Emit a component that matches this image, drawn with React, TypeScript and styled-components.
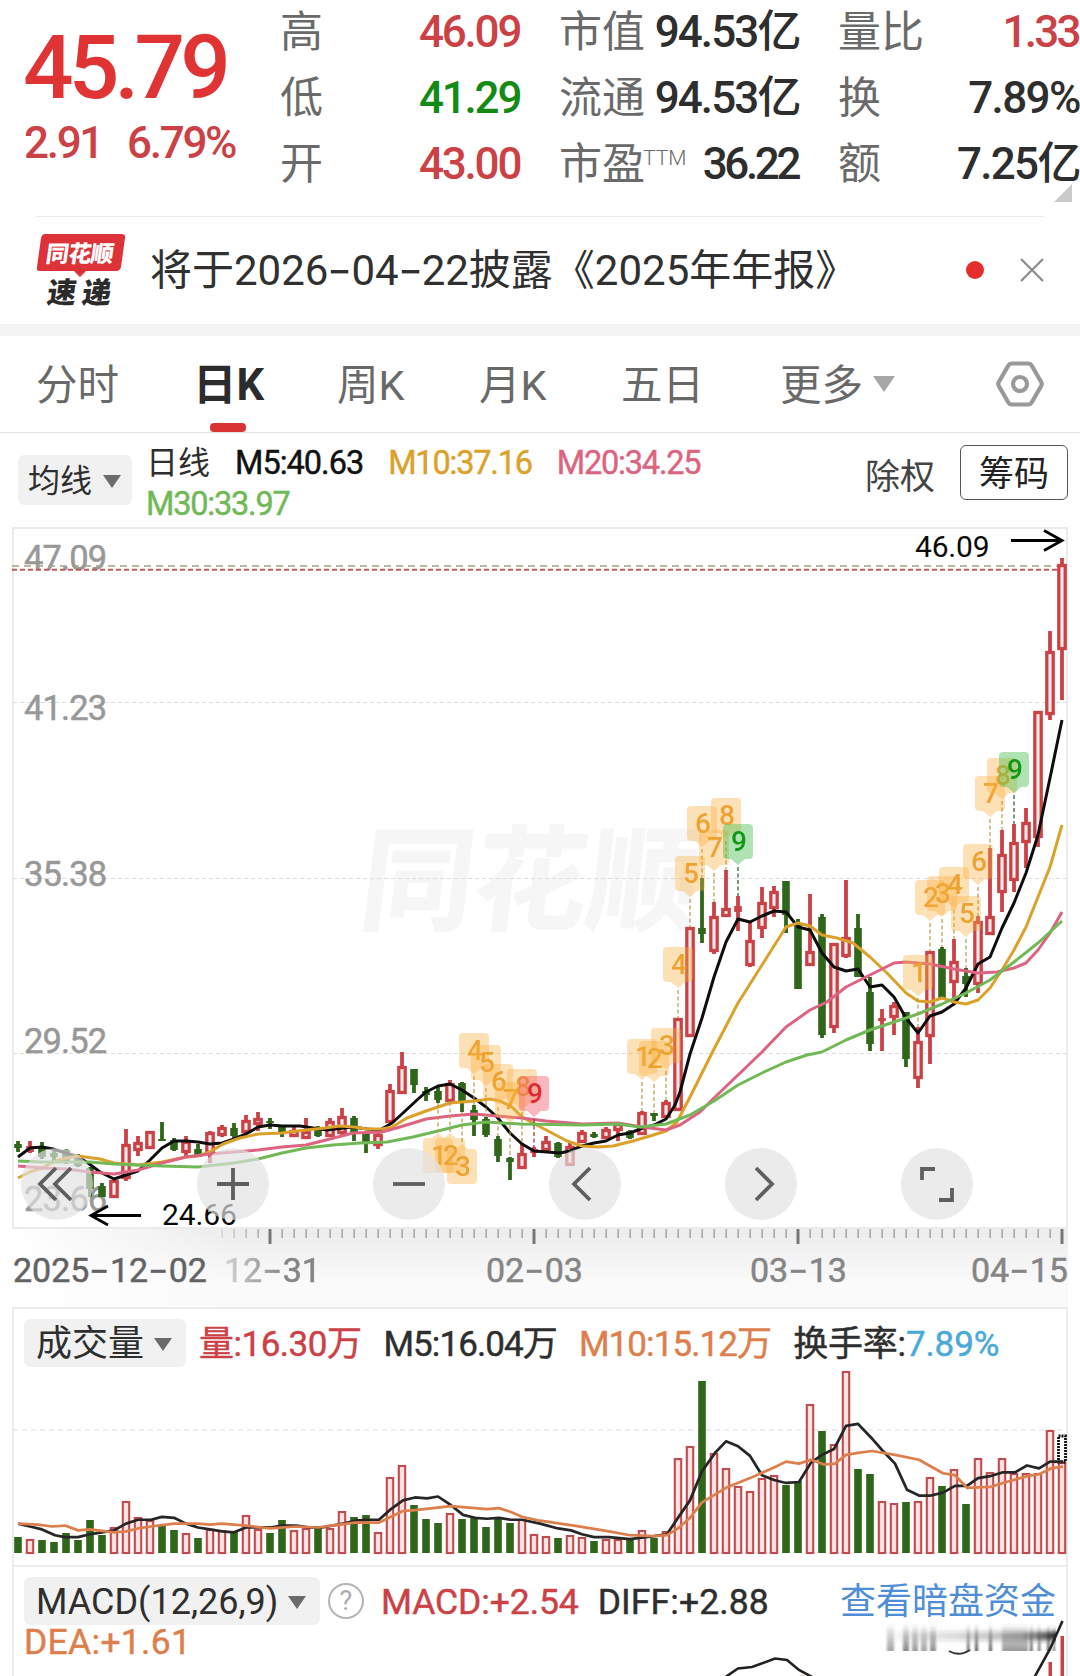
import React from "react";
import styled, { createGlobalStyle, css } from "styled-components";

const RED = "#cb4146";
const GREEN = "#2f6619";
const INK = "#2e2e2e";
const GOLD = "#dba12a";
const PINK = "#dd6480";
const LIME = "#70b956";
const FONT = `Roboto, "Noto Sans CJK SC", sans-serif`;

const Global = createGlobalStyle`
  * { box-sizing: border-box; }
  body { margin: 0; background: #fff; font-family: ${FONT}; color: ${INK}; }
`;

const Screen = styled.main`
  width: 1080px;
  height: 1676px;
  overflow: hidden;
  display: flex;
  flex-direction: column;
  background: #fff;
`;

/* ---------- quote header ---------- */

const Quote = styled.header`
  position: relative;
  display: flex;
  height: 216px;
  flex: none;
`;

const PriceBlock = styled.div`
  width: 280px;
  padding: 22px 0 0 23px;
`;

const Price = styled.div`
  font-size: 89px;
  line-height: 92px;
  font-weight: 500;
  letter-spacing: -4.8px;
  color: #e03333;
`;

const Change = styled.div`
  display: flex;
  gap: 25px;
  margin: 4px 0 0 1px;
  font-size: 44px;
  line-height: 50px;
  letter-spacing: -2.3px;
  font-weight: 500;
  color: ${RED};
`;

const Stats = styled.div`
  display: grid;
  grid-template-columns: 241px 241px 242px;
  grid-auto-rows: 66px;
  column-gap: 38px;
  margin-top: -1px;
`;

const Stat = styled.div`
  display: flex;
  justify-content: space-between;
  align-items: center;
  white-space: nowrap;
`;

const StatLabel = styled.span`
  font-size: 43px;
  line-height: 66px;
  color: #6a6a6a;
`;

const Ttm = styled.sup`
  margin-left: -2px;
  font-size: 21px;
  line-height: 0;
  font-weight: 300;
  vertical-align: 14px;
`;

const StatValue = styled.span<{ $color?: string; $ls?: number }>`
  margin-right: ${(p) => -(p.$ls ?? -2.2) - 1.4}px;
  font-size: 44px;
  line-height: 66px;
  font-weight: 500;
  letter-spacing: ${(p) => p.$ls ?? -2.2}px;
  color: ${(p) => p.$color || INK};
`;

const Corner = styled.i`
  position: absolute;
  right: 8px;
  bottom: 14px;
  border-left: 18px solid transparent;
  border-bottom: 18px solid #cacaca;
`;

/* ---------- notice ---------- */

const Notice = styled.section`
  display: flex;
  align-items: center;
  flex: none;
  height: 108px;
  margin: 0 36px;
  border-top: 1px solid #ebebeb;
`;

const NoticeLogo = styled.svg`
  display: block;
  width: 90px;
  height: 80px;
  margin-top: -3px;
`;

const NoticeText = styled.div`
  display: flex;
  align-items: center;
  margin-left: 24px;
  font-size: 42px;
  line-height: 60px;
  white-space: nowrap;
  color: #303030;
`;

const Dot = styled.i`
  width: 18px;
  height: 18px;
  margin: -2px 0 0 auto;
  border-radius: 50%;
  background: #e52d2d;
`;

const CloseIcon = styled.svg`
  width: 24px;
  height: 24px;
  margin: -2px 0 0 36px;
`;

const Dash = styled.span<{ $w: number }>`
  display: inline-block;
  width: ${(p) => p.$w}px;
  text-align: center;
  font-family: Inter, sans-serif;
  letter-spacing: 0;
  transform: scaleX(1.3);
`;

const Divider = styled.div`
  flex: none;
  height: 12px;
  background: #f4f4f4;
`;

/* ---------- tabs ---------- */

const Tabs = styled.nav`
  display: flex;
  align-items: center;
  flex: none;
  height: 97px;
  padding: 0 36px 0 36px;
  border-bottom: 1px solid #e2e2e2;
`;

const Tab = styled.div<{ $w: number; $active?: boolean }>`
  position: relative;
  display: flex;
  align-items: center;
  gap: 10px;
  width: ${(p) => p.$w}px;
  height: 96px;
  padding-bottom: 5px;
  font-size: 41.5px;
  color: #696969;
  ${(p) =>
    p.$active &&
    css`
      font-size: 43.5px;
      font-weight: 700;
      color: #2c2c2c;
      &::after {
        content: "";
        position: absolute;
        left: 17px;
        bottom: 0;
        width: 36px;
        height: 9px;
        border-radius: 4px;
        background: #d93434;
      }
    `}
`;

const Caret = styled.i<{ $size?: number; $color?: string }>`
  border: ${(p) => p.$size || 9}px solid transparent;
  border-top: ${(p) => (p.$size || 9) * 1.45}px solid ${(p) => p.$color || "#6b6b6b"};
  border-bottom: 0;
`;

const MoreCaret = styled(Caret)`
  margin-top: 4px;
`;

const HexIcon = styled.svg`
  width: 50px;
  height: 48px;
  margin-left: auto;
  margin-right: -1px;
`;

/* ---------- price panel ---------- */

const Legend = styled.div`
  display: flex;
  flex: none;
  height: 94px;
  padding: 0 12px 0 18px;
`;

const Picker = styled.button<{ $w: number; $h: number; $size: number }>`
  display: flex;
  align-items: center;
  justify-content: space-between;
  flex: none;
  width: ${(p) => p.$w}px;
  height: ${(p) => p.$h}px;
  padding: 2px 14px 0 12px;
  border: 0;
  border-radius: 6px;
  background: #f1f1f1;
  font-family: ${FONT};
  font-size: ${(p) => p.$size}px;
  line-height: 1;
  color: ${INK};
  white-space: nowrap;
`;

const AveragesPicker = styled(Picker)`
  margin-top: 22px;
  padding: 2px 11px 0 10px;
`;

const Averages = styled.div`
  display: flex;
  flex-wrap: wrap;
  align-content: flex-start;
  column-gap: 25px;
  width: 640px;
  margin-left: 14px;
  padding-top: 10px;
`;

const Reading = styled.span<{ $color?: string; $size?: number; $ls?: number }>`
  font-size: ${(p) => p.$size || 32.5}px;
  line-height: 41px;
  font-weight: 400;
  -webkit-text-stroke: 0.45px currentColor;
  letter-spacing: ${(p) => p.$ls ?? -1.2}px;
  white-space: nowrap;
  color: ${(p) => p.$color || INK};
`;

const ReadingName = styled(Reading)`
  letter-spacing: 0;
  font-size: 32px;
  -webkit-text-stroke: 0;
`;

const Adjust = styled.span`
  margin: 20px 25px 0 auto;
  font-size: 35px;
  line-height: 50px;
  color: #444;
`;

const Chips = styled.button`
  width: 108px;
  height: 55px;
  margin-top: 12px;
  padding: 4px 0 0;
  border: 1.5px solid #555;
  border-radius: 6px;
  background: #fff;
  font-family: ${FONT};
  font-size: 35px;
  line-height: 1;
  color: #222;
`;

const ChartArea = styled.section`
  position: relative;
  flex: none;
  height: 702px;
`;

const Plot = styled.svg`
  display: block;
  width: 1080px;
  text {
    font-family: ${FONT};
  }
`;

const Controls = styled.div`
  position: absolute;
  left: 21px;
  bottom: 9px;
  display: flex;
  gap: 104px;
`;

const Control = styled.button`
  display: grid;
  place-items: center;
  width: 72px;
  height: 72px;
  padding: 0;
  border: 0;
  border-radius: 50%;
  background: rgba(226, 226, 226, 0.68);
  svg {
    width: 44px;
    height: 44px;
    fill: none;
    stroke: #5f5f5f;
    stroke-width: 3.8;
  }
`;

const Axis = styled.div`
  flex: none;
  height: 78px;
  margin: 0 12px 0 13px;
  background: linear-gradient(90deg, #fff 0, rgba(255, 255, 255, 0) 220px), linear-gradient(#ececec, #fafafa 70%);
`;

const Ruler = styled.svg`
  display: block;
  width: 1055px;
  height: 16px;
`;

const Dates = styled.div`
  display: flex;
  align-items: center;
  height: 48px;
  font-size: 34px;
  font-weight: 400;
  -webkit-text-stroke: 0.5px currentColor;
  color: #858585;
  white-space: nowrap;
`;

const DateLabel = styled.span<{ $w: number; $first?: boolean; $fade?: boolean }>`
  flex: none;
  width: ${(p) => p.$w}px;
  ${(p) => p.$first && `color: #636363;`}
  ${(p) =>
    p.$fade &&
    css`
      mask-image: linear-gradient(90deg, rgba(0, 0, 0, 0.3), #000 60px);
    `}
`;

/* ---------- lower panels ---------- */

const Panel = styled.section<{ $h: number }>`
  position: relative;
  flex: none;
  height: ${(p) => p.$h}px;
  margin: 0 12px;
  border: 2px solid #ececec;
  border-bottom: 0;
`;

const PanelHead = styled.div<{ $top: number }>`
  display: flex;
  align-items: center;
  height: 48px;
  margin: ${(p) => p.$top}px 0 0 10px;
`;

const Readings = styled.div<{ $gap: number; $left: number }>`
  display: flex;
  gap: ${(p) => p.$gap}px;
  margin-left: ${(p) => p.$left}px;
  padding-top: 2px;
`;

const VolumePlot = styled(Plot)`
  height: 198px;
  margin: 1px 0 0 -14px;
`;

const Help = styled.span`
  display: grid;
  place-items: center;
  width: 36px;
  height: 36px;
  margin-left: 8px;
  border: 2px solid #b5b5b5;
  border-radius: 50%;
  font-size: 27px;
  line-height: 1;
  color: #adadad;
`;

const DarkPool = styled.a`
  margin: 2px 10px 0 auto;
  font-size: 36px;
  line-height: 48px;
  color: #4f8ed6;
`;

const DeaRow = styled.div`
  margin: -3px 0 0 10px;
  line-height: 40px;
`;

const MacdPlot = styled(Plot)`
  position: absolute;
  left: -14px;
  top: 44px;
  height: 66px;
`;

/* ---------- data ---------- */

const xAt = (i: number) => 18 + i * 12;
const TOP = 527;

// [high, body top, body bottom, low, rising]
const candles: number[][] = [
  [1141,1144,1148,1152,0],[1141,1146,1152,1153,1],[1142,1146,1157,1159,0],[1151,1153,1157,1161,0],
  [1149,1150,1161,1164,0],[1154,1155,1166,1167,0],[1167,1168,1189,1197,0],[1183,1186,1197,1197,0],
  [1180,1180,1198,1198,1],[1129,1144,1179,1181,1],[1136,1142,1151,1156,1],[1131,1131,1149,1149,1],
  [1122,1139,1141,1141,0],[1138,1140,1150,1151,0],[1136,1141,1153,1156,1],[1144,1149,1157,1157,0],
  [1131,1132,1154,1163,1],[1125,1127,1136,1137,1],[1123,1128,1136,1138,0],[1115,1120,1133,1133,1],
  [1112,1118,1125,1131,1],[1118,1121,1123,1129,0],[1125,1126,1134,1137,0],[1126,1130,1137,1137,1],
  [1118,1131,1139,1139,1],[1126,1127,1136,1137,0],[1118,1121,1137,1137,1],[1108,1116,1134,1136,1],
  [1116,1118,1134,1141,0],[1133,1134,1144,1153,0],[1132,1134,1146,1149,1],[1084,1090,1123,1123,1],
  [1052,1066,1094,1094,1],[1069,1069,1085,1093,0],[1087,1091,1095,1101,0],[1086,1091,1100,1103,0],
  [1080,1083,1102,1102,1],[1082,1083,1101,1112,0],[1105,1110,1120,1136,0],[1117,1119,1135,1137,0],
  [1136,1139,1156,1162,0],[1157,1158,1162,1180,0],[1143,1153,1169,1169,1],[1147,1149,1153,1157,1],
  [1136,1141,1151,1151,1],[1142,1143,1157,1158,0],[1143,1146,1166,1166,1],[1130,1132,1143,1143,1],
  [1132,1134,1137,1138,0],[1127,1129,1139,1139,1],[1122,1123,1131,1141,1],[1130,1131,1138,1139,0],
  [1111,1112,1135,1135,1],[1113,1113,1116,1121,0],[1100,1102,1118,1118,1],[1018,1018,1111,1111,1],
  [927,927,1037,1037,1],[878,928,934,943,0],[902,916,952,954,1],[870,908,917,917,1],
  [896,906,912,931,1],[922,940,966,967,1],[887,902,929,938,1],[886,891,909,917,1],
  [881,881,915,933,0],[919,923,989,989,0],[894,951,966,966,1],[914,917,1035,1038,0],
  [943,943,1028,1033,1],[880,937,957,958,1],[914,928,977,977,0],[977,992,1044,1051,0],
  [1009,1018,1021,1051,1],[1002,1005,1018,1035,1],[1012,1012,1059,1067,0],[1027,1041,1079,1088,1],
  [951,951,1037,1064,1],[947,949,998,998,0],[939,961,983,1005,1],[968,976,984,997,0],
  [916,921,985,993,1],[848,916,935,935,1],[830,854,893,912,1],[824,842,881,892,1],
  [808,822,843,868,1],[711,711,838,847,1],[631,651,715,720,1],[558,564,650,700,1],
];

const ma5 = "18,1157 30,1148 42,1147 53,1149 66,1153 78,1157 88,1163 100,1172 114,1179 126,1175 138,1171 150,1160 162,1148 174,1141 186,1141 198,1142 210,1144 222,1143 234,1139 246,1134 258,1127 270,1125 282,1126 300,1126 313,1128 327,1130 353,1127 367,1129 380,1130 392,1123 403,1113 417,1100 426,1092 438,1086 450,1084 462,1090 474,1098 486,1107 497,1117 510,1133 522,1144 534,1151 547,1152 560,1153 570,1151 582,1146 594,1143 606,1141 618,1135 630,1133 643,1128 654,1125 666,1119 675,1105 680,1092 690,1054 702,1018 714,977 726,942 738,919 750,922 762,916 774,911 786,912 798,927 810,930 822,953 834,967 846,971 858,969 870,987 882,985 894,997 906,1018 918,1033 930,1016 942,1012 954,1004 966,988 978,964 990,957 1002,928 1014,903 1026,873 1038,835 1050,778 1062,720";
const ma10 = "18,1178 30,1172 42,1168 57,1160 78,1156 100,1159 114,1163 138,1165 162,1162 186,1157 198,1156 210,1152 223,1144 240,1138 258,1134 282,1133 306,1130 325,1128 340,1126 354,1127 367,1129 382,1129 392,1127 407,1118 426,1111 450,1103 474,1101 490,1099 500,1101 512,1107 522,1117 533,1123 550,1132 567,1141 582,1146 597,1147 613,1146 633,1141 650,1136 666,1131 677,1122 690,1097 703,1071 713,1051 738,1003 762,965 786,927 798,923 810,926 822,935 837,938 853,943 870,957 887,973 906,993 918,1001 930,1002 942,998 954,1002 966,1004 978,1000 990,988 1002,970 1014,950 1026,927 1038,897 1050,867 1062,825";
const ma20 = "18,1166 42,1168 66,1169 90,1172 114,1174 138,1170 162,1163 186,1157 210,1154 234,1152 258,1150 282,1147 306,1145 330,1139 353,1133 382,1132 400,1127 426,1119 450,1116 474,1114 497,1116 522,1118 546,1121 582,1124 618,1123 642,1127 666,1130 680,1125 700,1112 714,1098 738,1075 762,1052 786,1027 810,1010 827,1002 846,987 870,975 894,963 906,962 930,964 954,969 978,973 997,972 1014,968 1026,963 1038,950 1050,933 1062,912";
const ma30 = "18,1161 42,1162 66,1162 90,1162 114,1164 138,1165 162,1166 198,1167 234,1163 258,1159 282,1153 306,1148 333,1145 360,1143 387,1142 413,1137 438,1131 462,1125 486,1122 520,1124 582,1125 618,1124 640,1127 666,1124 690,1115 714,1101 738,1085 762,1073 786,1062 807,1055 822,1052 846,1040 870,1030 894,1022 918,1014 942,1004 966,993 990,980 1014,962 1038,943 1062,921";

type Mark = { i: number; y: number; n: number; tone?: "red" | "green"; below?: boolean };
const marks: Mark[] = [
  { i: 35, y: 1138, n: 1, below: true }, { i: 36, y: 1138, n: 2, below: true }, { i: 37, y: 1149, n: 3, below: true },
  { i: 38, y: 1033, n: 4 }, { i: 39, y: 1045, n: 5 }, { i: 40, y: 1064, n: 6 }, { i: 41, y: 1082, n: 7 },
  { i: 42, y: 1069, n: 8 }, { i: 43, y: 1076, n: 9, tone: "red" },
  { i: 52, y: 1039, n: 1 }, { i: 53, y: 1041, n: 2 }, { i: 54, y: 1028, n: 3 }, { i: 55, y: 947, n: 4 },
  { i: 56, y: 856, n: 5 }, { i: 57, y: 806, n: 6 }, { i: 58, y: 830, n: 7 }, { i: 59, y: 798, n: 8 },
  { i: 60, y: 824, n: 9, tone: "green" },
  { i: 75, y: 955, n: 1 }, { i: 76, y: 880, n: 2 }, { i: 77, y: 876, n: 3 }, { i: 78, y: 867, n: 4 },
  { i: 79, y: 896, n: 5 }, { i: 80, y: 844, n: 6 }, { i: 81, y: 776, n: 7 }, { i: 82, y: 758, n: 8 },
  { i: 83, y: 752, n: 9, tone: "green" },
];

const volumes = [
  16,14,13,11,20,13,33,18,26,52,36,33,28,23,20,15,24,23,22,38,24,20,33,23,25,25,25,42,36,38,21,76,88,48,34,30,40,34,35,26,35,30,34,19,
  17,15,18,16,12,14,14,13,23,15,22,95,107,172,100,85,67,62,75,78,68,72,149,122,109,182,84,79,52,50,51,52,76,67,84,49,95,81,95,80,80,80,123,91,
];

const vol5 = "18,231 30,234 42,237 55,243 65,245 78,245 90,242 102,240 114,238 126,231 138,227 151,227 162,224 174,225 186,231 198,235 210,237 222,239 234,240 246,235 270,235 282,233 296,233 310,235 322,235 343,231 355,228 367,227 379,227 391,216 403,207 415,204 427,205 438,203 451,212 463,222 475,225 487,226 499,225 511,227 522,227 540,231 558,236 571,238 582,242 594,245 609,245 630,247 654,244 667,242 678,225 690,207 702,177 715,158 726,146 738,151 750,161 762,181 774,186 786,189 799,188 811,168 822,160 834,154 846,130 858,128 871,142 883,156 895,169 907,196 919,202 931,202 943,199 955,192 967,192 978,184 990,182 1003,178 1015,178 1027,171 1039,174 1050,167 1063,167";
const vol10 = "18,231 38,232 52,234 65,233 78,238 90,237 114,240 126,239 138,236 151,234 174,231 198,231 210,232 222,231 246,233 270,236 296,234 318,235 331,233 355,230 379,230 391,224 403,218 415,217 451,213 487,216 499,215 511,219 522,224 540,228 574,233 609,239 630,243 654,244 667,243 678,236 690,225 702,209 726,194 750,184 774,173 786,167 799,169 811,165 824,170 835,169 846,160 858,158 872,156 895,160 919,165 943,179 955,181 967,194 991,193 1003,189 1027,182 1039,180 1051,174 1063,172";

const priceLabels: [string, number][] = [
  ["47.09", 570], ["41.23", 720], ["35.38", 886], ["29.52", 1053], ["23.66", 1211],
];

const smears: [number, number, number][] = [
  [887, 7, 0.45], [903, 6, 0.6], [912, 6, 0.5], [921, 6, 0.45], [930, 6, 0.55], [967, 2.5, 0.8], [975, 3, 0.85],
  [989, 3, 0.8], [1002, 26, 0.5], [1030, 2.5, 0.85], [1038, 2.5, 0.7], [1047, 3, 0.8], [1053, 2, 0.7],
];

/* ---------- pieces ---------- */

function Dashed({ text, w }: { text: string; w: number }) {
  return (
    <span>
      {text.split("-").map((part, i) => (
        <React.Fragment key={i}>
          {i > 0 && <Dash $w={w}>-</Dash>}
          {part}
        </React.Fragment>
      ))}
    </span>
  );
}

function CandleShape({ i }: { i: number }) {
  const [high, top, bottom, low, up] = candles[i];
  const x = xAt(i);
  const color = up ? RED : GREEN;
  const h = bottom - top;
  return (
    <g>
      {high < top && <rect x={x - 1.9} y={high} width={3.8} height={top - high} fill={color} />}
      {low > bottom && <rect x={x - 1.9} y={bottom} width={3.8} height={low - bottom} fill={color} />}
      {up && h > 6 ? (
        <rect x={x - 3.2} y={top + 1.5} width={6.4} height={h - 3} fill="#ffeceb" stroke={color} strokeWidth={3.3} />
      ) : (
        <rect x={x - 3.8} y={top} width={7.6} height={h} fill={color} />
      )}
    </g>
  );
}

function MarkShape({ i, y, n, tone, below }: Mark) {
  const x = xAt(i);
  const fill = tone === "green" ? "#4fc257" : tone === "red" ? "#f5606e" : "#fbb040";
  const ink = tone === "green" ? "#0c930c" : tone === "red" ? "#dc2330" : "#eda02c";
  const line = tone === "green" ? "#2c5a2c" : tone === "red" ? "#8c3030" : "#b79a45";
  const [high, , , low] = candles[i];
  const body = below
    ? `M${x - 11},${y} H${x - 6} L${x},${y - 5} L${x + 6},${y} H${x + 11} Q${x + 15},${y} ${x + 15},${y + 4} V${y + 31} Q${x + 15},${y + 35} ${x + 11},${y + 35} H${x - 11} Q${x - 15},${y + 35} ${x - 15},${y + 31} V${y + 4} Q${x - 15},${y} ${x - 11},${y} Z`
    : `M${x - 11},${y} H${x + 11} Q${x + 15},${y} ${x + 15},${y + 4} V${y + 31} Q${x + 15},${y + 35} ${x + 11},${y + 35} H${x + 7} L${x},${y + 41} L${x - 7},${y + 35} H${x - 11} Q${x - 15},${y + 35} ${x - 15},${y + 31} V${y + 4} Q${x - 15},${y} ${x - 11},${y} Z`;
  return (
    <g>
      <line x1={x} x2={x} y1={below ? low : y + 43} y2={below ? y - 6 : high} stroke={line} strokeWidth={1.2} strokeDasharray="4 2.5" />
      <path d={body} fill={fill} opacity={tone ? 0.45 : 0.38} />
      <text x={x + 1} y={y + 26.5} fontSize={28} fontWeight={500} textAnchor="middle" fill={ink} opacity={0.95}>{n}</text>
    </g>
  );
}

function PriceChart() {
  return (
    <Plot height={702} viewBox={`0 ${TOP} 1080 702`}>
      <rect x={13} y={528} width={1054} height={700} fill="none" stroke="#ebebeb" strokeWidth={2} />
      <text x={0} y={0} transform="translate(357 921) skewX(-7)" fontSize={113} fontWeight={700} fill="#f6f6f6" stroke="#f6f6f6" strokeWidth={1.5}>同花顺</text>
      {[702.5, 878.5, 1053.5].map((y) => (
        <line key={y} x1={13} x2={1066} y1={y} y2={y} stroke="#dcdcdc" strokeWidth={1} strokeDasharray="4 3" />
      ))}
      {priceLabels.map(([t, y]) => (
        <text key={t} x={24} y={y} fontSize={34.5} fill="#989898" stroke="#989898" strokeWidth={0.5} letterSpacing={-0.9}>{t}</text>
      ))}
      <line x1={12} x2={1062} y1={566} y2={566} stroke="#a5a184" strokeWidth={1.7} strokeDasharray="7 5" />
      <line x1={12} x2={1062} y1={569.8} y2={569.8} stroke="#c25a5a" strokeWidth={2} strokeDasharray="5 3" />
      {candles.map((_, i) => <CandleShape key={i} i={i} />)}
      <g fill="none" strokeWidth={3} strokeLinejoin="round">
        <polyline points={ma5} stroke="#0d0d0d" />
        <polyline points={ma10} stroke={GOLD} />
        <polyline points={ma20} stroke={PINK} />
        <polyline points={ma30} stroke={LIME} />
      </g>
      {marks.map((m) => <MarkShape key={`${m.i}`} {...m} />)}
      <text x={915} y={557} fontSize={30} fill="#0a0a0a" letterSpacing={-0.2}>46.09</text>
      <path d="M1011 540.5H1062M1044 530.5L1062 540.5L1044 550.5" fill="none" stroke="#000" strokeWidth={2.8} />
      <text x={162} y={1224.5} fontSize={30} fill="#0a0a0a" letterSpacing={-0.1}>24.66</text>
      <path d="M141 1215.5H91M108 1206L91 1215.5L108 1225" fill="none" stroke="#000" strokeWidth={2.8} />
    </Plot>
  );
}

const controlPaths = [
  "M21 6L5 22L21 38M36 6L20 22L36 38",
  "M22 6V38M6 22H38",
  "M6 22H38",
  "M27 6L11 22L27 38",
  "M17 6L33 22L17 38",
  "M7 18V7H20M37 26V38H24",
];

function VolumeChart() {
  return (
    <VolumePlot viewBox="0 0 1080 198">
      <line x1={13} x2={1066} y1={62} y2={62} stroke="#dedede" strokeDasharray="5 4" />
      {volumes.map((h, i) =>
        candles[i][4] ? (
          <rect key={i} x={xAt(i) - 3.2} y={186 - h} width={6.4} height={h - 1} fill="#fde2e2" stroke="#c04c50" strokeWidth={2.1} />
        ) : (
          <rect key={i} x={xAt(i) - 3.8} y={185 - h} width={7.6} height={h} fill={GREEN} />
        )
      )}
      <rect x={1058.5} y={68} width={7} height={26} fill="#fff" stroke="#111" strokeWidth={2.8} strokeDasharray="2 1" />
      <g fill="none" strokeWidth={2.8} strokeLinejoin="round" transform="translate(0 -68) scale(1 0.968)">
        <polyline points={vol5} stroke="#262626" />
        <polyline points={vol10} stroke="#dd7f4c" />
      </g>
    </VolumePlot>
  );
}

function MacdChart() {
  return (
    <MacdPlot viewBox="0 1610 1080 66">
      <defs>
        <linearGradient id="streak" x1="0" x2="0" y1="0" y2="1">
          <stop offset="0" stopColor="#444" stopOpacity="0" />
          <stop offset="1" stopColor="#333" />
        </linearGradient>
        <linearGradient id="band" x1="0" x2="1" y1="0" y2="0">
          <stop offset="0" stopColor="#222" stopOpacity="0" />
          <stop offset="0.8" stopColor="#222" stopOpacity="0.35" />
          <stop offset="1" stopColor="#111" stopOpacity="0.95" />
        </linearGradient>
        <filter id="soft" x="-5%" y="-80%" width="110%" height="260%"><feGaussianBlur stdDeviation="0 2.5" /></filter>
        <filter id="smear" x="-50%" y="-10%" width="200%" height="120%"><feGaussianBlur stdDeviation="0.8 0" /></filter>
      </defs>
      <g filter="url(#smear)">
        {smears.map(([x, w, o]) => (
          <rect key={x} x={x} y={1622} width={w} height={28} fill="url(#streak)" opacity={o} />
        ))}
      </g>
      <rect x={880} y={1631} width={176} height={8} fill="url(#band)" filter="url(#soft)" />
      <path d="M949 1650Q959 1656 970 1649" fill="none" stroke="#333" strokeWidth={1.8} />
      <rect x={1048.5} y={1661} width={3.5} height={15} fill={RED} />
      <rect x={1060.5} y={1635} width={3.5} height={41} fill={RED} />
      <path d="M1034 1677L1050 1648L1062.500 1620M724 1677L738 1667.500L752 1666L775 1657.500L787 1659L799 1669L814 1677" fill="none" stroke="#222" strokeWidth={2.6} />
      <path d="M794 1677L802 1675.500L812 1677" fill="none" stroke="#dd7f4c" strokeWidth={2} />
    </MacdPlot>
  );
}

export default function App() {
  return (
    <Screen>
      <Global />
      <Quote>
        <PriceBlock>
          <Price>45.79</Price>
          <Change><span>2.91</span><span>6.79%</span></Change>
        </PriceBlock>
        <Stats>
          <Stat><StatLabel>高</StatLabel><StatValue $color={RED}>46.09</StatValue></Stat>
          <Stat><StatLabel>市值</StatLabel><StatValue $ls={-1.9}>94.53亿</StatValue></Stat>
          <Stat><StatLabel>量比</StatLabel><StatValue $color={RED} $ls={-2.8}>1.33</StatValue></Stat>
          <Stat><StatLabel>低</StatLabel><StatValue $color="#138a13">41.29</StatValue></Stat>
          <Stat><StatLabel>流通</StatLabel><StatValue $ls={-1.9}>94.53亿</StatValue></Stat>
          <Stat><StatLabel>换</StatLabel><StatValue $ls={-1.6}>7.89%</StatValue></Stat>
          <Stat><StatLabel>开</StatLabel><StatValue $color={RED}>43.00</StatValue></Stat>
          <Stat><StatLabel>市盈<Ttm>TTM</Ttm></StatLabel><StatValue $ls={-3.4}>36.22</StatValue></Stat>
          <Stat><StatLabel>额</StatLabel><StatValue $ls={-1.7}>7.25亿</StatValue></Stat>
        </Stats>
        <Corner />
      </Quote>

      <Notice>
        <NoticeLogo viewBox="0 0 90 80">
          <path d="M9 5H85Q90 5 89 9L85 38Q84 42 80 42H50L44 48L38 42H4Q0 42 1 38L5 9Q6 5 9 5Z" fill="#dc3238" />
          <text transform="translate(9 33) skewX(-8)" fontSize={23} fontWeight={900} fill="#fff" fontFamily={FONT} letterSpacing={-0.6}>同花顺</text>
          <text transform="translate(10 74) skewX(-8)" fontSize={29} fontWeight={900} fill="#2b2b2b" fontFamily={FONT} letterSpacing={6}>速递</text>
        </NoticeLogo>
        <NoticeText><Dashed text="将于2026-04-22披露《2025年年报》" w={23} /></NoticeText>
        <Dot />
        <CloseIcon viewBox="0 0 24 24"><path d="M1 1L23 23M23 1L1 23" stroke="#8f8f8f" strokeWidth={2.4} /></CloseIcon>
      </Notice>
      <Divider />

      <Tabs>
        <Tab $w={157}>分时</Tab>
        <Tab $w={144} $active>日K</Tab>
        <Tab $w={142}>周K</Tab>
        <Tab $w={142}>月K</Tab>
        <Tab $w={159}>五日</Tab>
        <Tab $w={130}>更多<MoreCaret $size={11.5} $color="#a6a6a6" /></Tab>
        <HexIcon viewBox="0 0 50 48">
          <path d="M16.500 3.500H33.500Q35.500 3.500 36.500 5.200L46.300 22.300Q47.200 24 46.300 25.700L36.500 42.800Q35.500 44.500 33.500 44.500H16.500Q14.500 44.500 13.500 42.800L3.700 25.700Q2.800 24 3.700 22.300L13.500 5.200Q14.500 3.500 16.500 3.500Z" fill="none" stroke="#999" strokeWidth={4.2} />
          <circle cx={25} cy={24} r={7} fill="none" stroke="#999" strokeWidth={4.2} />
        </HexIcon>
      </Tabs>

      <Legend>
        <AveragesPicker $w={114} $h={50} $size={32}>均线<Caret /></AveragesPicker>
        <Averages>
          <ReadingName>日线</ReadingName>
          <Reading $color="#111" $ls={-1}>M5:40.63</Reading>
          <Reading $color={GOLD}>M10:37.16</Reading>
          <Reading $color={PINK}>M20:34.25</Reading>
          <Reading $color={LIME}>M30:33.97</Reading>
        </Averages>
        <Adjust>除权</Adjust>
        <Chips>筹码</Chips>
      </Legend>

      <ChartArea>
        <PriceChart />
        <Controls>
          {controlPaths.map((d) => (
            <Control key={d}><svg viewBox="0 0 44 44"><path d={d} /></svg></Control>
          ))}
        </Controls>
      </ChartArea>

      <Axis>
        <Ruler viewBox="13 0 1055 16">
          {Array.from({ length: 71 }, (_, k) => {
            const x = 222 + k * 12;
            const major = (x - 270) % 264 === 0;
            return <rect key={x} x={x - (major ? 1.5 : 0.5)} y={0} width={major ? 3 : 1.3} height={major ? 15 : 9} fill={major ? "#777" : "#999"} opacity={x < 260 ? (x - 200) / 65 : 1} />;
          })}
        </Ruler>
        <Dates>
          <DateLabel $w={211} $first><Dashed text="2025-12-02" w={20.5} /></DateLabel>
          <DateLabel $w={262} $fade><Dashed text="12-31" w={20.5} /></DateLabel>
          <DateLabel $w={264}><Dashed text="02-03" w={20.5} /></DateLabel>
          <DateLabel $w={221}><Dashed text="03-13" w={20.5} /></DateLabel>
          <DateLabel $w={97}><Dashed text="04-15" w={20.5} /></DateLabel>
        </Dates>
      </Axis>

      <Panel $h={258}>
        <PanelHead $top={10}>
          <Picker $w={162} $h={48} $size={36}>成交量<Caret /></Picker>
          <Readings $left={13} $gap={22}>
            <Reading $size={35} $color={RED} $ls={-0.5}>量:16.30万</Reading>
            <Reading $size={35} $ls={-0.9}>M5:16.04万</Reading>
            <Reading $size={35} $color="#dd7f4c" $ls={-0.9}>M10:15.12万</Reading>
            <Reading $size={35} $ls={-0.2}>换手率:<Reading $size={35} $color="#4aa9d8" $ls={-0.1}>7.89%</Reading></Reading>
          </Readings>
        </PanelHead>
        <VolumeChart />
      </Panel>

      <Panel $h={111}>
        <MacdChart />
        <PanelHead $top={10}>
          <Picker $w={296} $h={48} $size={36}>MACD(12,26,9)<Caret /></Picker>
          <Help>?</Help>
          <Readings $left={17} $gap={19}>
            <Reading $size={35.5} $color={RED} $ls={-0.1}>MACD:+2.54</Reading>
            <Reading $size={35.5} $ls={0.1}>DIFF:+2.88</Reading>
          </Readings>
          <DarkPool>查看暗盘资金</DarkPool>
        </PanelHead>
        <DeaRow><Reading $size={35.5} $color="#dd7f4c" $ls={0.3}>DEA:+1.61</Reading></DeaRow>
      </Panel>
    </Screen>
  );
}
